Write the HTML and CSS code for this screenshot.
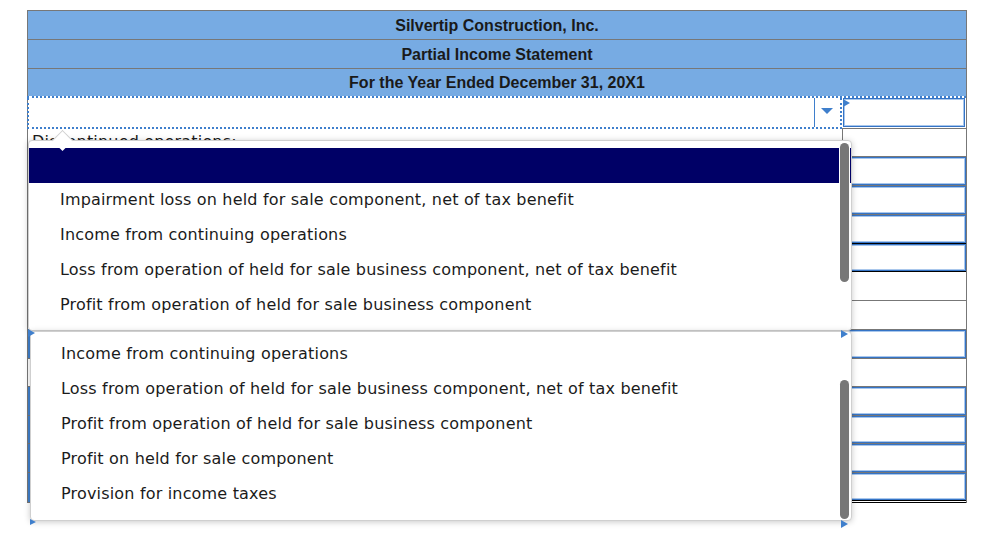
FILE: index.html
```html
<!DOCTYPE html>
<html>
<head>
<meta charset="utf-8">
<link rel="stylesheet" href="styles.css">
</head>
<body>
<div class="page">
  <div class="sheet">
    <div class="hdr">Silvertip Construction, Inc.</div>
    <div class="hdr">Partial Income Statement</div>
    <div class="hdr last">For the Year Ended December 31, 20X1</div>

    <div class="row focus">
      <div class="lab"><div class="sel"><span class="sep"></span><span class="caret"></span></div></div>
      <div class="amt"><div class="inp"></div></div>
    </div>
    <div class="row h28"><div class="lab"><span class="label">Discontinued operations:</span></div><div class="amt"></div></div>
    <div class="row h29"><div class="lab"></div><div class="amt"><div class="inp"></div></div></div>
    <div class="row h29"><div class="lab"></div><div class="amt"><div class="inp"></div></div></div>
    <div class="row h29"><div class="lab"></div><div class="amt total"><div class="inp"></div></div></div>
    <div class="row h28"><div class="lab"></div><div class="amt total"><div class="inp"></div></div></div>
    <div class="row h29"><div class="lab"></div><div class="amt"></div></div>
    <div class="row h29"><div class="lab"></div><div class="amt"></div></div>
    <div class="row h29"><div class="lab"><div class="lsel"></div></div><div class="amt"><div class="inp"></div></div></div>
    <div class="row h28"><div class="lab"></div><div class="amt"></div></div>
    <div class="row h29"><div class="lab"><div class="lsel"></div></div><div class="amt"><div class="inp"></div></div></div>
    <div class="row h28"><div class="lab"><div class="lsel"></div></div><div class="amt"><div class="inp"></div></div></div>
    <div class="row h29"><div class="lab"><div class="lsel"></div></div><div class="amt"><div class="inp"></div></div></div>
    <div class="row h30"><div class="lab"><div class="lsel"></div></div><div class="amt grand"><div class="inp"></div></div></div>
  </div>

  <span class="mark m1"></span>

  <div class="dropdown dd1">
    <div class="opt selected"></div>
    <div class="opt">Impairment loss on held for sale component, net of tax benefit</div>
    <div class="opt">Income from continuing operations</div>
    <div class="opt">Loss from operation of held for sale business component, net of tax benefit</div>
    <div class="opt">Profit from operation of held for sale business component</div>
    <span class="thumb"></span>
  </div>

  <div class="dropdown dd2">
    <div class="opt">Income from continuing operations</div>
    <div class="opt">Loss from operation of held for sale business component, net of tax benefit</div>
    <div class="opt">Profit from operation of held for sale business component</div>
    <div class="opt">Profit on held for sale component</div>
    <div class="opt">Provision for income taxes</div>
    <span class="thumb"></span>
  </div>

  <span class="mark m2"></span>
  <span class="mark m3"></span>
  <span class="mark m4"></span>
  <span class="mark m5"></span>
</div>
</body>
</html>
```

FILE: styles.css
```css
body {
  margin: 0;
  background: #fff;
  font-family: "DejaVu Sans", Verdana, sans-serif;
}

.page {
  position: relative;
  width: 984px;
  height: 542px;
  overflow: hidden;
}

.sheet {
  margin: 10px 0 0 27px;
  width: 940px;
  box-sizing: border-box;
  border: 1px solid #777;
  border-bottom: none;
}

.hdr {
  height: 28px;
  background: #77abe3;
  border-bottom: 1px solid #777;
  text-align: center;
  font-family: "Liberation Sans", Arial, sans-serif;
  font-weight: bold;
  font-size: 16px;
  line-height: 29px;
  color: #1a1a1a;
}

.hdr.last {
  height: 27px;
  line-height: 27px;
  border-bottom: none;
}

.row {
  display: flex;
}

.lab {
  width: 814px;
  box-sizing: border-box;
  border-bottom: 1px solid #777;
}

.amt {
  width: 124px;
  box-sizing: border-box;
  border-left: 1px solid #777;
  border-bottom: 1px solid #777;
  padding-left: 1px;
}

.amt.total {
  border-bottom-color: #000;
}

.amt.grand {
  border-bottom: 3px double #000;
}

.h28 { height: 28px; }
.h29 { height: 29px; }
.h30 { height: 30px; }

.row.focus {
  height: 31px;
  margin-left: -1px;
  border-top: 2px dotted #3f7fcc;
}

.row.focus .lab {
  width: 815px;
  border: 2px dotted #3f7fcc;
  border-top: none;
}

.row.focus .amt {
  border-left: none;
  padding: 0 0 1px 1px;
}

.sel {
  position: relative;
  height: 100%;
}

.sep {
  position: absolute;
  left: 785px;
  top: 0;
  bottom: 0;
  width: 1px;
  background: #3f7fcc;
}

.caret {
  position: absolute;
  left: 792px;
  top: 10px;
  width: 0;
  height: 0;
  border-left: 6px solid transparent;
  border-right: 6px solid transparent;
  border-top: 6px solid #3f7fcc;
}

.inp {
  width: 122px;
  height: 100%;
  box-sizing: border-box;
  border: 1px solid #3574c6;
  box-shadow: inset 0 0 0 1px #a9c7ec;
}

.label {
  display: block;
  padding: 3px 0 0 4px;
  font-size: 16px;
  letter-spacing: 0.18px;
  color: #1b1b1b;
}

.lsel {
  height: 100%;
  border-left: 2px solid #3f7fcc;
}

.dropdown {
  position: absolute;
  background: #fff;
  border: 1px solid #cfcfcf;
  border-radius: 4px;
  box-shadow: 0 1px 6px rgba(0, 0, 0, 0.22);
  box-sizing: border-box;
}

.dd1 {
  left: 28px;
  top: 140px;
  width: 824px;
  height: 191px;
  padding-top: 7px;
}

.dd1::before {
  content: "";
  position: absolute;
  left: 26px;
  top: -8px;
  width: 14px;
  height: 14px;
  background: #fff;
  border-top: 1px solid #cfcfcf;
  border-left: 1px solid #cfcfcf;
  transform: rotate(45deg);
}

.dd2 {
  left: 30px;
  top: 331px;
  width: 822px;
  height: 190px;
  padding-top: 5px;
}

.opt {
  height: 35px;
  line-height: 34px;
  padding-left: 31px;
  font-size: 16px;
  letter-spacing: 0.18px;
  color: #1b1b1b;
  white-space: nowrap;
}

.dd2 .opt {
  padding-left: 30px;
}

.opt.selected {
  background: #000066;
}

.thumb {
  position: absolute;
  width: 9px;
  height: 139px;
  background: #777;
  border-radius: 5px;
  box-shadow: 0 0 0 1px #fff;
}

.dd1 .thumb {
  left: 811px;
  top: 2px;
}

.dd2 .thumb {
  left: 809px;
  top: 48px;
}

.mark {
  position: absolute;
  width: 0;
  height: 0;
  border-top: 4px solid transparent;
  border-bottom: 4px solid transparent;
  border-left: 7px solid #3f7fcc;
}

.m1 { left: 843px; top: 99px; }
.m2 { left: 28px; top: 329px; }
.m3 { left: 841px; top: 330px; }
.m4 { left: 30px; top: 519px; border-top-width: 3px; border-bottom-width: 3px; border-left-width: 6px; }
.m5 { left: 841px; top: 520px; }
```
